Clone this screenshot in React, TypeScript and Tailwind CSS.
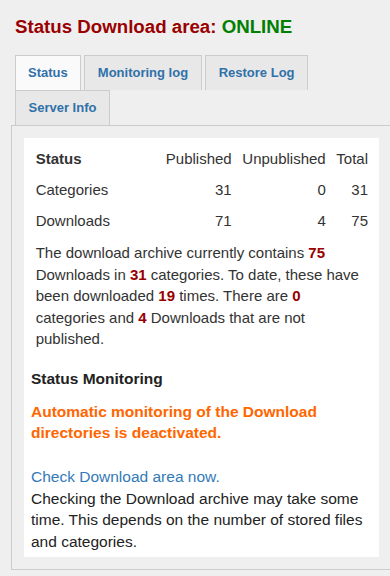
import React from "react";

const Tab = ({ label, active, px }: { label: string; active?: boolean; px: string }) => (
  <div
    className={
      "flex h-[35px] items-center border border-b-0 border-[#cccccc] text-[13px] font-bold text-[#3071a9] " +
      px +
      " " +
      (active ? "bg-[#fafafa]" : "bg-[#e8e8e8]")
    }
  >
    {label}
  </div>
);

const N = ({ children }: { children: React.ReactNode }) => (
  <b className="font-bold text-[#990000]">{children}</b>
);

export default function App() {
  const rows = [
    ["Categories", "31", "0", "31"],
    ["Downloads", "71", "4", "75"],
  ];
  return (
    <div className="min-h-screen overflow-hidden bg-[#efefef] pb-6 pl-[11px] pt-4 font-['Liberation_Sans',Arial,sans-serif] text-[#333333]">
      <h1 className="ml-1 text-[18.7px] font-bold leading-[22px] text-[#990000]">
        Status Download area: <span className="text-[#008000]">ONLINE</span>
      </h1>
      <div className="ml-1 mt-[17px] flex flex-wrap gap-x-[3.6px]">
        <Tab label="Status" active px="px-[12px]" />
        <Tab label="Monitoring log" px="px-[12.5px]" />
        <Tab label="Restore Log" px="px-[12.5px]" />
        <Tab label="Server Info" px="px-[12.5px]" />
      </div>
      <div className="w-[381px] border border-[#cccccc] p-3">
        <div className="bg-white pb-[5px] pt-[6px]">
          <div className="grid grid-cols-[1fr_auto_auto_auto] gap-x-[10.6px] pl-[11.7px] pr-[11px] text-[15px]">
            <div className="flex h-[31px] items-center font-bold">Status</div>
            <div className="flex h-[31px] items-center justify-end">Published</div>
            <div className="flex h-[31px] items-center justify-end">Unpublished</div>
            <div className="flex h-[31px] items-center justify-end">Total</div>
            {rows.map((r) => (
              <React.Fragment key={r[0]}>
                <div className="flex h-[31px] items-center">{r[0]}</div>
                <div className="flex h-[31px] items-center justify-end">{r[1]}</div>
                <div className="flex h-[31px] items-center justify-end">{r[2]}</div>
                <div className="flex h-[31px] items-center justify-end">{r[3]}</div>
              </React.Fragment>
            ))}
          </div>
          <p className="mt-[5.4px] pl-[11.7px] pr-[11px] text-[15px] leading-[21.4px]">
            The download archive currently contains <N>75</N> Downloads in <N>31</N> categories. To date,
            these have been downloaded <N>19</N> times. There are <N>0</N> categories and <N>4</N> Downloads
            that are not published.
          </p>
          <div className="px-[7px] text-[15.5px]">
            <h3 className="mt-[18.7px] font-bold leading-[21px] text-[#222222]">Status Monitoring</h3>
            <p className="mt-[11.7px] font-bold leading-[21px] text-[#ff6600]">
              Automatic monitoring of the Download directories is deactivated.
            </p>
            <a className="mt-[21.8px] block leading-[23.3px] text-[#337ab7]" href="#">
              Check Download area now.
            </a>
            <p className="leading-[21.5px] text-[#222222]">
              Checking the Download archive may take some time. This depends on the number of stored files and
              categories.
            </p>
          </div>
        </div>
      </div>
    </div>
  );
}
